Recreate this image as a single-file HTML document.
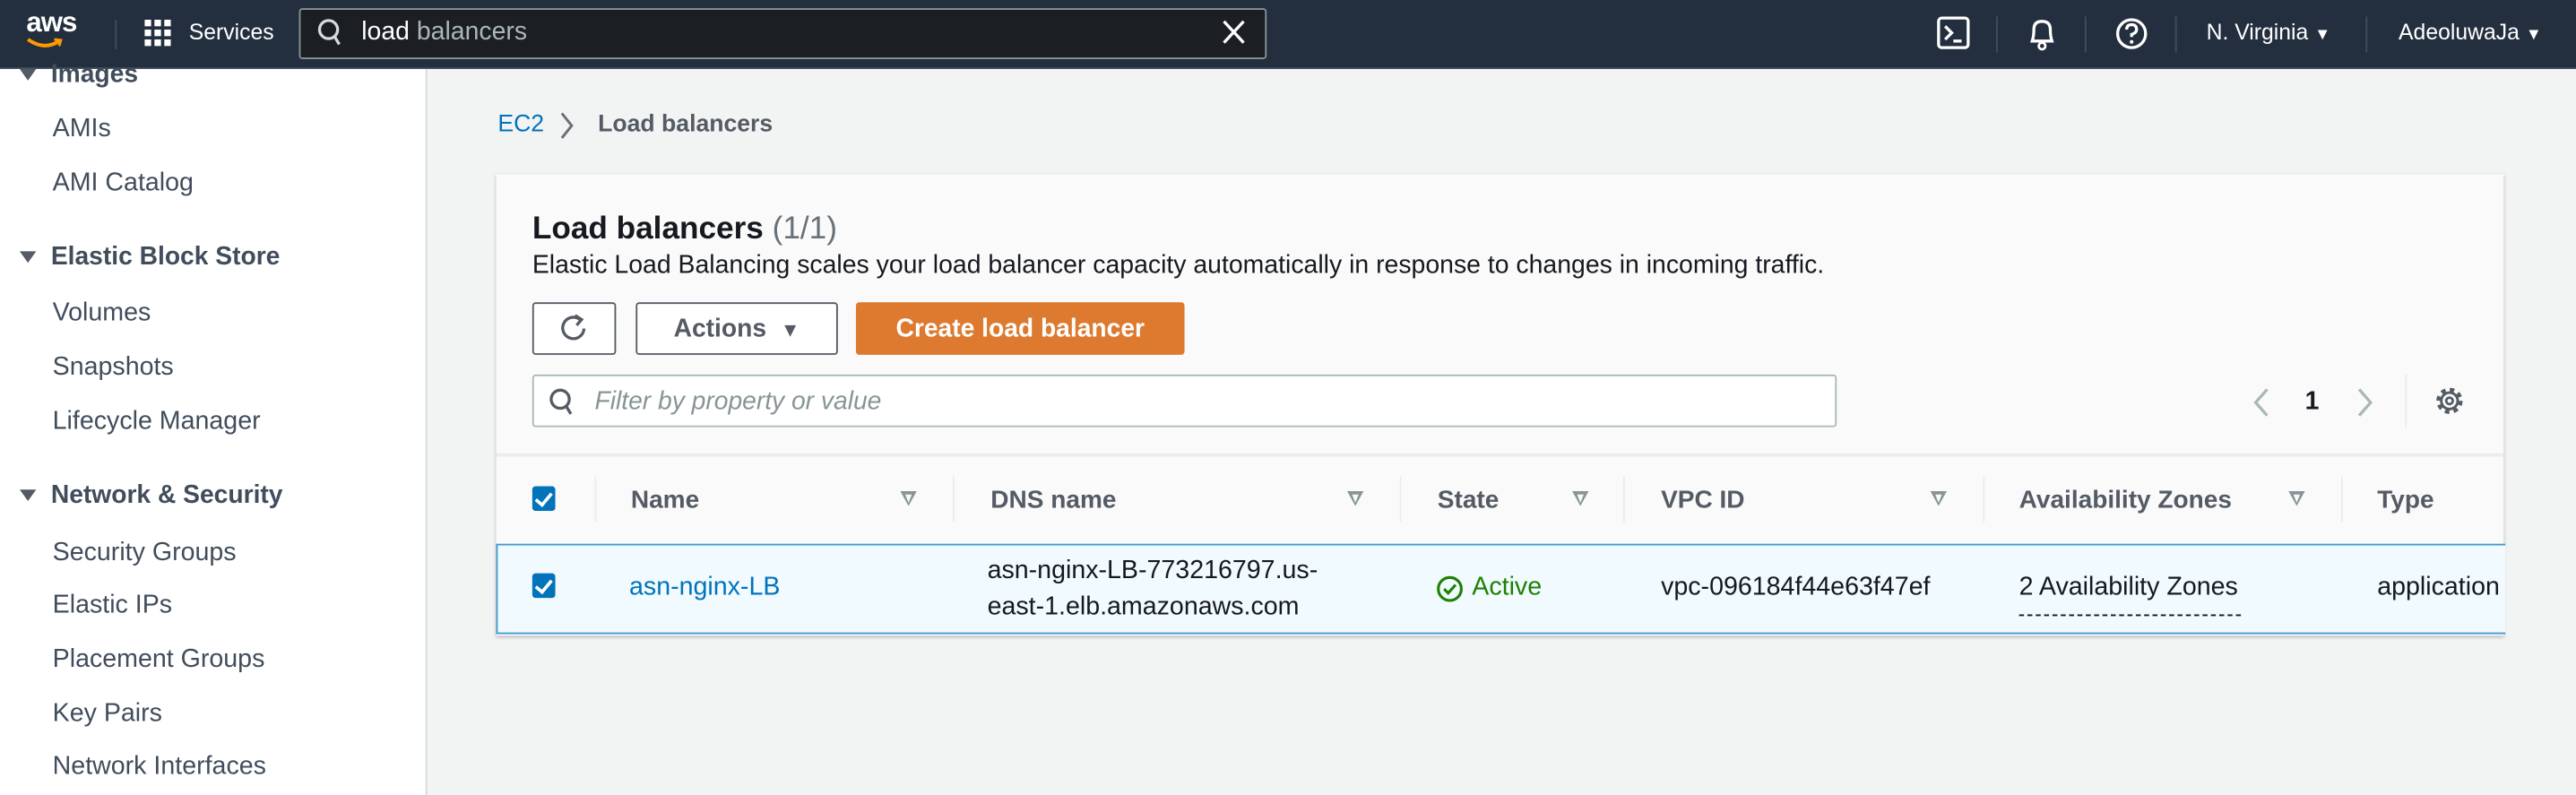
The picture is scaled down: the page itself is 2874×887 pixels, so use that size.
<!DOCTYPE html>
<html><head><meta charset="utf-8"><style>
html,body{margin:0;padding:0;width:2874px;height:886px;overflow:hidden;background:#f2f3f3}
#w{position:absolute;left:0;top:0;width:1568px;height:484px;transform:scale(1.83291);transform-origin:0 0;font-family:"Liberation Sans",sans-serif;color:#16191f}
.a{position:absolute;white-space:nowrap}
.top{position:absolute;left:0;top:0;width:1568px;height:41px;background:#232f3e;border-bottom:1px solid #414d5c}
.side{position:absolute;left:0;top:42px;width:259px;height:442px;background:#fff;border-right:1px solid #d5dbdb}
.si{position:absolute;left:32px;font-size:15.6px;color:#414d5c}
.sh{position:absolute;left:12px;font-size:15.4px;font-weight:bold;color:#414d5c}
.tri{display:inline-block;width:0;height:0;border-left:5px solid transparent;border-right:5px solid transparent;border-top:7px solid #545b64;margin-right:9px;vertical-align:1px}
.panel{position:absolute;left:302px;top:106px;width:1222px;height:281px;background:#fafafa;box-shadow:0 1px 2px rgba(0,0,0,.25)}
.btn{position:absolute;top:184px;height:30px;border:1px solid #545b64;border-radius:2px;background:#fff;font-weight:bold;font-size:15.4px;color:#545b64;text-align:center;line-height:32px}
.hd{position:absolute;top:296px;font-size:15.3px;font-weight:bold;color:#545b64}
.dv{position:absolute;top:290px;width:1px;height:28px;background:#eaeded}
.so{position:absolute;top:299px;width:0;height:0;border-left:5px solid transparent;border-right:5px solid transparent;border-top:9px solid #879596}
.so:after{content:"";position:absolute;left:-2.5px;top:-7.5px;border-left:2.5px solid transparent;border-right:2.5px solid transparent;border-top:5px solid #fafafa}
.cb{position:absolute;width:14px;height:15px;background:#0073bb;border-radius:2px}
.cb:after{content:"";position:absolute;left:4px;top:2px;width:4px;height:8px;border:solid #fff;border-width:0 2px 2px 0;transform:rotate(40deg)}
.rt{position:absolute;font-size:15.6px;color:#16191f}
</style></head><body><div id="w">
<div class="top">
 <div class="a" style="left:16px;top:4px;color:#fff;font-size:17px;font-weight:bold;letter-spacing:-0.5px">aws</div>
 <svg class="a" style="left:15px;top:22px" width="24" height="10"><path d="M2 2 Q12 9 21 3" stroke="#ff9900" stroke-width="2.2" fill="none"/><path d="M18 2 L22 2.5 L21 6" stroke="#ff9900" stroke-width="1.6" fill="none"/></svg>
 <div class="a" style="left:70px;top:12px;width:1px;height:18px;background:#414d5c"></div>
 <svg class="a" style="left:88px;top:12px" width="16" height="17"><g fill="#fff"><rect x="0" y="0" width="4" height="4"/><rect x="6" y="0" width="4" height="4"/><rect x="12" y="0" width="4" height="4"/><rect x="0" y="6" width="4" height="4"/><rect x="6" y="6" width="4" height="4"/><rect x="12" y="6" width="4" height="4"/><rect x="0" y="12" width="4" height="4"/><rect x="6" y="12" width="4" height="4"/><rect x="12" y="12" width="4" height="4"/></g></svg>
 <div class="a" style="left:115px;top:12px;color:#fff;font-size:13.5px">Services</div>
</div>
<div class="a" style="left:182px;top:5px;width:587px;height:29px;background:#1b1e23;border:1px solid #879596;border-radius:2px"></div>
<svg class="a" style="left:193px;top:11px" width="16" height="18"><circle cx="7" cy="7" r="5.5" stroke="#d5dbdb" stroke-width="1.8" fill="none"/><path d="M10.5 11 L13.5 16" stroke="#d5dbdb" stroke-width="1.8"/></svg>
<div class="a" style="left:220px;top:11px;font-size:15.5px;color:#fff">load <span style="color:#aab7b8">balancers</span></div>
<svg class="a" style="left:744px;top:12px" width="14" height="15"><path d="M1 1 L13 14 M13 1 L1 14" stroke="#fff" stroke-width="1.8"/></svg>
<svg class="a" style="left:1179px;top:10px" width="20" height="20"><rect x="1" y="1" width="18" height="18" rx="2" stroke="#fff" stroke-width="1.8" fill="none"/><path d="M5 6 L9 10 L5 14 M10 15 H15" stroke="#fff" stroke-width="1.8" fill="none"/></svg>
<div class="a" style="left:1215px;top:10px;width:1px;height:22px;background:#414d5c"></div>
<svg class="a" style="left:1233px;top:10px" width="20" height="21"><path d="M4 15 Q5 12 5 8 Q5 3 10 3 Q15 3 15 8 Q15 12 16 15 Z" stroke="#fff" stroke-width="1.8" fill="none"/><circle cx="10" cy="18" r="2" stroke="#fff" stroke-width="1.5" fill="none"/></svg>
<div class="a" style="left:1269px;top:10px;width:1px;height:22px;background:#414d5c"></div>
<svg class="a" style="left:1287px;top:10px" width="21" height="21"><circle cx="10.5" cy="10.5" r="8.5" stroke="#fff" stroke-width="1.8" fill="none"/><path d="M7.5 8 Q7.5 5 10.5 5 Q13.5 5 13.5 8 Q13.5 10 10.5 11 V12.5" stroke="#fff" stroke-width="1.8" fill="none"/><circle cx="10.5" cy="15.5" r="1.1" fill="#fff"/></svg>
<div class="a" style="left:1324px;top:10px;width:1px;height:22px;background:#414d5c"></div>
<div class="a" style="left:1343px;top:12px;color:#fff;font-size:13.5px">N. Virginia <span style="font-size:10px">▼</span></div>
<div class="a" style="left:1440px;top:10px;width:1px;height:22px;background:#414d5c"></div>
<div class="a" style="left:1460px;top:12px;color:#fff;font-size:13.5px">AdeoluwaJa <span style="font-size:10px">▼</span></div>

<div class="side">
 <div class="sh" style="top:-5px"><span class="tri"></span>Images</div>
 <div class="si" style="top:28px">AMIs</div>
 <div class="si" style="top:61px">AMI Catalog</div>
 <div class="sh" style="top:106px"><span class="tri"></span>Elastic Block Store</div>
 <div class="si" style="top:140px">Volumes</div>
 <div class="si" style="top:173px">Snapshots</div>
 <div class="si" style="top:206px">Lifecycle Manager</div>
 <div class="sh" style="top:251px"><span class="tri"></span>Network &amp; Security</div>
 <div class="si" style="top:286px">Security Groups</div>
 <div class="si" style="top:318px">Elastic IPs</div>
 <div class="si" style="top:351px">Placement Groups</div>
 <div class="si" style="top:384px">Key Pairs</div>
 <div class="si" style="top:416px">Network Interfaces</div>
</div>

<div class="a" style="left:303px;top:68px;font-size:14.5px;color:#0073bb">EC2</div>
<svg class="a" style="left:340px;top:68px" width="10" height="17"><path d="M2 1 L8 8.5 L2 16" stroke="#687078" stroke-width="1.6" fill="none"/></svg>
<div class="a" style="left:364px;top:68px;font-size:14.5px;color:#545b64;font-weight:bold">Load balancers</div>

<div class="panel"></div>
<div class="a" style="left:324px;top:129px;font-size:19.2px;font-weight:bold">Load balancers <span style="font-weight:normal;color:#687078">(1/1)</span></div>
<div class="a" style="left:324px;top:153px;font-size:15.5px">Elastic Load Balancing scales your load balancer capacity automatically in response to changes in incoming traffic.</div>
<div class="btn" style="left:324px;width:49px"><svg style="position:absolute;left:15px;top:6px" width="18" height="18"><path d="M13 3.5 A6.5 6.5 0 1 0 15.5 9" stroke="#545b64" stroke-width="1.8" fill="none"/><path d="M10 1 L14 3.5 L11 7" stroke="#545b64" stroke-width="1.8" fill="none"/></svg></div>
<div class="btn" style="left:387px;width:121px">Actions &nbsp;<span style="font-size:12px">▼</span></div>
<div class="btn" style="left:521px;width:198px;background:#dd7a30;border-color:#dd7a30;color:#fff">Create load balancer</div>
<div class="a" style="left:324px;top:228px;width:792px;height:30px;background:#fff;border:1px solid #aab7b8;border-radius:2px"></div>
<svg class="a" style="left:334px;top:236px" width="16" height="18"><circle cx="7" cy="7" r="5.5" stroke="#545b64" stroke-width="1.8" fill="none"/><path d="M10.5 11 L13.5 16" stroke="#545b64" stroke-width="1.8"/></svg>
<div class="a" style="left:362px;top:236px;font-size:15.4px;font-style:italic;color:#879596">Filter by property or value</div>
<svg class="a" style="left:1370px;top:235px" width="12" height="20"><path d="M10 2 L3 10 L10 18" stroke="#aab7b8" stroke-width="1.8" fill="none"/></svg>
<div class="a" style="left:1403px;top:236px;font-size:15.5px;font-weight:bold">1</div>
<svg class="a" style="left:1434px;top:235px" width="12" height="20"><path d="M2 2 L9 10 L2 18" stroke="#aab7b8" stroke-width="1.8" fill="none"/></svg>
<div class="a" style="left:1464px;top:228px;width:1px;height:32px;background:#eaeded"></div>
<svg class="a" style="left:1481px;top:234px" width="20" height="20"><circle cx="10" cy="10" r="6.5" stroke="#545b64" stroke-width="3" stroke-dasharray="2.6 2.5" fill="none"/><circle cx="10" cy="10" r="5" stroke="#545b64" stroke-width="1.6" fill="none"/><circle cx="10" cy="10" r="2" stroke="#545b64" stroke-width="1.5" fill="none"/></svg>

<div class="a" style="left:302px;top:276px;width:1222px;height:2px;background:#eaeded"></div>
<div class="cb" style="left:324px;top:296px"></div>
<div class="dv" style="left:362px"></div>
<div class="hd" style="left:384px">Name</div><div class="so" style="left:548px"></div>
<div class="dv" style="left:580px"></div>
<div class="hd" style="left:603px">DNS name</div><div class="so" style="left:820px"></div>
<div class="dv" style="left:852px"></div>
<div class="hd" style="left:875px">State</div><div class="so" style="left:957px"></div>
<div class="dv" style="left:988px"></div>
<div class="hd" style="left:1011px">VPC ID</div><div class="so" style="left:1175px"></div>
<div class="dv" style="left:1207px"></div>
<div class="hd" style="left:1229px">Availability Zones</div><div class="so" style="left:1393px"></div>
<div class="dv" style="left:1425px"></div>
<div class="hd" style="left:1447px">Type</div>

<div class="a" style="left:302px;top:331px;width:1222px;height:53px;background:#f1faff;border-top:1px solid #3f9bd0;border-bottom:1px solid #3f9bd0;border-left:1px solid #3f9bd0"></div>
<div class="cb" style="left:324px;top:349px"></div>
<div class="rt" style="left:383px;top:349px;color:#0073bb">asn-nginx-LB</div>
<div class="rt" style="left:601px;top:339px">asn-nginx-LB-773216797.us-</div>
<div class="rt" style="left:601px;top:361px">east-1.elb.amazonaws.com</div>
<svg class="a" style="left:874px;top:350px" width="17" height="17"><circle cx="8.5" cy="8.5" r="7" stroke="#1d8102" stroke-width="1.7" fill="none"/><path d="M5 8.5 L7.5 11 L12 6" stroke="#1d8102" stroke-width="1.7" fill="none"/></svg>
<div class="rt" style="left:896px;top:349px;color:#1d8102">Active</div>
<div class="rt" style="left:1011px;top:349px">vpc-096184f44e63f47ef</div>
<div class="rt" style="left:1229px;top:349px">2 Availability Zones</div>
<div class="a" style="left:1229px;top:374px;width:135px;border-top:1px dashed #16191f"></div>
<div class="rt" style="left:1447px;top:349px">application</div>
</div></body></html>
